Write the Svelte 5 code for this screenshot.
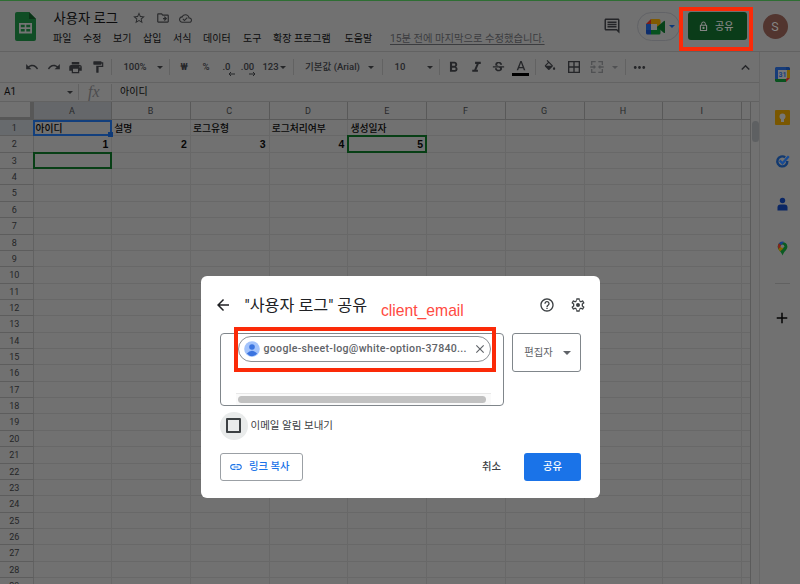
<script>
  const menus = [
    ['파일', 30], ['수정', 30], ['보기', 30], ['삽입', 30], ['서식', 30],
    ['데이터', 40], ['도구', 30], ['확장 프로그램', 71.5], ['도움말', 45.5],
  ];

  const P = {
    undo: 'M12.5 8c-2.65 0-5.05.99-6.9 2.6L2 7v9h9l-3.62-3.62c1.39-1.16 3.16-1.88 5.12-1.88 3.54 0 6.55 2.31 7.6 5.5l2.37-.78C21.08 11.03 17.15 8 12.5 8z',
    redo: 'M18.4 10.6C16.55 8.99 14.15 8 11.5 8c-4.65 0-8.58 3.03-9.96 7.22L3.9 16c1.05-3.19 4.05-5.5 7.6-5.5 1.95 0 3.73.72 5.12 1.88L13 16h9V7l-3.6 3.6z',
    print: 'M19 8H5c-1.66 0-3 1.34-3 3v6h4v4h12v-4h4v-6c0-1.66-1.34-3-3-3zm-3 11H8v-5h8v5zm3-7c-.55 0-1-.45-1-1s.45-1 1-1 1 .45 1 1-.45 1-1 1zm-1-9H6v4h12V3z',
    paint: 'M18 4V3c0-.55-.45-1-1-1H5c-.55 0-1 .45-1 1v4c0 .55.45 1 1 1h12c.55 0 1-.45 1-1V6h1v4H9v11c0 .55.45 1 1 1h2c.55 0 1-.45 1-1v-9h8V4h-3z',
    bold: 'M15.6 10.79c.97-.67 1.65-1.77 1.65-2.79 0-2.26-1.75-4-4-4H7v14h7.04c2.09 0 3.71-1.7 3.71-3.79 0-1.52-.86-2.82-2.15-3.42zM10 6.5h3c.83 0 1.5.67 1.5 1.5s-.67 1.5-1.5 1.5h-3v-3zm3.5 9H10v-3h3.5c.83 0 1.5.67 1.5 1.5s-.67 1.5-1.5 1.5z',
    italic: 'M10 4v3h2.21l-3.42 8H6v3h8v-3h-2.21l3.42-8H18V4z',
    strike: 'M7.24 8.75c-.26-.48-.39-1.03-.39-1.67 0-.61.13-1.16.4-1.67.26-.5.63-.93 1.11-1.29.48-.35 1.05-.63 1.7-.83.66-.19 1.39-.29 2.18-.29.81 0 1.54.11 2.21.34.66.22 1.23.54 1.69.94.47.4.83.88 1.08 1.43.25.55.38 1.15.38 1.81h-3.01c0-.31-.05-.59-.15-.85-.09-.27-.24-.49-.44-.68-.2-.19-.45-.33-.75-.44-.3-.1-.66-.16-1.06-.16-.39 0-.74.04-1.03.13-.29.09-.53.21-.72.36-.19.16-.34.34-.44.55-.1.21-.15.43-.15.66 0 .48.25.88.74 1.21.38.25.77.48 1.41.7H7.39c-.05-.08-.11-.17-.15-.25zM21 12v-2H3v2h9.62c.18.07.4.14.55.2.37.17.66.34.87.51.21.17.35.36.43.57.07.2.11.43.11.69 0 .23-.05.45-.14.66-.09.2-.23.38-.42.53-.19.15-.42.26-.71.35-.29.08-.63.13-1.01.13-.43 0-.83-.04-1.18-.13s-.66-.23-.91-.42c-.25-.19-.45-.44-.59-.75-.14-.31-.25-.76-.25-1.21H6.4c0 .55.08 1.13.24 1.58.16.45.37.85.65 1.21.28.35.6.66.98.92.37.26.78.48 1.22.65.44.17.9.3 1.38.39.48.08.96.13 1.44.13.8 0 1.53-.09 2.18-.28s1.21-.45 1.67-.79c.46-.34.82-.77 1.07-1.27s.38-1.07.38-1.71c0-.6-.1-1.14-.31-1.61-.05-.11-.11-.23-.17-.33H21z',
    color: 'M11 3L5.5 17h2.25l1.12-3h6.25l1.12 3h2.25L13 3h-2zm-1.38 9L12 5.67 14.38 12H9.62z',
    fill: 'M16.56 8.94L7.62 0 6.21 1.41l2.38 2.38-5.15 5.15c-.59.59-.59 1.54 0 2.12l5.5 5.5c.29.29.68.44 1.06.44s.77-.15 1.06-.44l5.5-5.5c.59-.58.59-1.53 0-2.12zM5.21 10L10 5.21 14.79 10H5.21zM19 11.5s-2 2.17-2 3.5c0 1.1.9 2 2 2s2-.9 2-2c0-1.33-2-3.5-2-3.5z',
    borders: 'M3 3v18h18V3H3zm8 16H5v-6h6v6zm0-8H5V5h6v6zm8 8h-6v-6h6v6zm0-8h-6V5h6v6z',
    merge: 'M3 3h7v2H5v4H3V3zm11 0h7v6h-2V5h-5V3zM3 15h2v4h5v2H3v-6zm16 0h2v6h-7v-2h5v-4zM2 11h5V8.500l3.500 3.500L7 15.500V13H2v-2zm20 0h-5V8.500L13.500 12l3.500 3.500V13h5v-2z',
    more: 'M6 10c-1.100 0-2 .9-2 2s.9 2 2 2 2-.9 2-2-.9-2-2-2zm12 0c-1.100 0-2 .9-2 2s.9 2 2 2 2-.9 2-2-.9-2-2-2zm-6 0c-1.100 0-2 .9-2 2s.9 2 2 2 2-.9 2-2-.9-2-2-2z',
    up: 'M12 8l-6 6 1.410 1.410L12 10.830l4.590 4.580L18 14z',
    star: 'M22 9.240l-7.190-.62L12 2 9.190 8.630 2 9.240l5.460 4.730L5.820 21 12 17.270 18.180 21l-1.630-7.030L22 9.240zM12 15.400l-3.760 2.270 1-4.280-3.320-2.880 4.380-.38L12 6.100l1.710 4.040 4.380.38-3.320 2.880 1 4.280L12 15.400z',
    folder: 'M20 6h-8l-2-2H4c-1.100 0-2 .9-2 2v12c0 1.100.9 2 2 2h16c1.100 0 2-.9 2-2V8c0-1.100-.9-2-2-2zm0 12H4V6h5.170l2 2H20v10zm-8-4h3.200l-1.600 1.600L15 17l4-4-4-4-1.400 1.400 1.600 1.600H12v2z',
    cloud: 'M19.350 10.040C18.670 6.590 15.640 4 12 4 9.110 4 6.600 5.640 5.350 8.040 2.340 8.360 0 10.910 0 14c0 3.310 2.690 6 6 6h13c2.760 0 5-2.240 5-5 0-2.640-2.050-4.780-4.650-4.960zM19 18H6c-2.210 0-4-1.790-4-4s1.790-4 4-4h.71C7.370 7.690 9.480 6 12 6c3.040 0 5.500 2.460 5.500 5.500v.5H19c1.660 0 3 1.340 3 3s-1.340 3-3 3zm-9-3.820l-2.090-2.090L6.500 13.500 10 17l6.010-6.010-1.410-1.410z',
    comment: 'M21.990 4c0-1.100-.89-2-1.990-2H4c-1.100 0-2 .9-2 2v12c0 1.100.9 2 2 2h14l4 4-.01-18zM20 4v13.170L18.830 16H4V4h16zM6 12h12v2H6v-2zm0-3h12v2H6V9zm0-3h12v2H6V6z',
    lock: 'M18 8h-1V6c0-2.760-2.240-5-5-5S7 3.240 7 6v2H6c-1.100 0-2 .9-2 2v10c0 1.100.9 2 2 2h12c1.100 0 2-.9 2-2V10c0-1.100-.9-2-2-2zM9 6c0-1.660 1.340-3 3-3s3 1.340 3 3v2H9V6zm8.500 13.500H6.500V10.500h11v9zm-5.500-2c1.380 0 2.500-1.120 2.500-2.500s-1.120-2.500-2.500-2.500-2.500 1.120-2.500 2.500 1.120 2.500 2.500 2.500z',
    back: 'M20 11H7.830l5.590-5.590L12 4l-8 8 8 8 1.410-1.410L7.830 13H20v-2z',
    help: 'M11 18h2v-2h-2v2zm1-16C6.480 2 2 6.480 2 12s4.480 10 10 10 10-4.480 10-10S17.520 2 12 2zm0 18c-4.410 0-8-3.590-8-8s3.590-8 8-8 8 3.590 8 8-3.590 8-8 8zm0-14c-2.210 0-4 1.790-4 4h2c0-1.100.9-2 2-2s2 .9 2 2c0 2-3 1.750-3 5h2c0-2.250 3-2.500 3-5 0-2.210-1.790-4-4-4z',
    gear: 'M19.430 12.980c.04-.32.07-.64.07-.98s-.03-.66-.07-.98l2.110-1.650c.19-.15.24-.42.12-.64l-2-3.460c-.12-.22-.39-.3-.61-.22l-2.490 1c-.52-.4-1.080-.73-1.690-.98l-.38-2.650C14.460 2.180 14.250 2 14 2h-4c-.25 0-.46.18-.49.42l-.38 2.650c-.61.25-1.170.59-1.690.98l-2.490-1c-.23-.09-.49 0-.61.22l-2 3.460c-.13.22-.07.49.12.64l2.110 1.650c-.04.32-.07.65-.07.98s.03.66.07.98l-2.110 1.650c-.19.15-.24.42-.12.64l2 3.460c.12.22.39.3.61.22l2.490-1c.52.4 1.080.73 1.690.98l.38 2.650c.03.24.24.42.49.42h4c.25 0 .46-.18.49-.42l.38-2.650c.61-.25 1.170-.59 1.690-.98l2.490 1c.23.09.49 0 .61-.22l2-3.460c.12-.22.07-.49-.12-.64l-2.110-1.650zM17.500 13.700l1.900 1.500-.9 1.600-2.250-.9-2.250 1.300L13.600 20h-3.200l-.4-2.800-2.250-1.300-2.250.9-.9-1.600 1.900-1.500v-3.400L4.600 8.800l.9-1.600 2.250.9L10 6.800l.4-2.800h3.200l.4 2.800 2.250 1.300 2.250-.9.9 1.600-1.900 1.500v3.400zM12 9a3 3 0 1 0 0 6 3 3 0 0 0 0-6z',
    close: 'M19 6.410L17.590 5 12 10.590 6.410 5 5 6.410 10.590 12 5 17.590 6.410 19 12 13.410 17.590 19 19 17.590 13.410 12z',
    link: 'M3.900 12c0-1.710 1.390-3.100 3.100-3.100h4V7H7c-2.760 0-5 2.240-5 5s2.240 5 5 5h4v-1.900H7c-1.710 0-3.100-1.390-3.100-3.100zM8 13h8v-2H8v2zm9-6h-4v1.900h4c1.710 0 3.100 1.390 3.100 3.100s-1.390 3.100-3.100 3.100h-4V17h4c2.760 0 5-2.240 5-5s-2.240-5-5-5z',
    plus: 'M19 13h-6v6h-2v-6H5v-2h6V5h2v6h6v2z',
  };

  const tools = [
    { w: 23, i: 'undo' }, { w: 22, i: 'redo' }, { w: 21, i: 'print', s: 15 }, { w: 23, i: 'paint' },
    { w: 4, k: 'sep' }, { w: 44, t: '100%' }, { w: 5, k: 'caret' }, { w: 14, k: 'sep' },
    { w: 16, t: '₩', b: 1 }, { w: 28, t: '%' }, { w: 13, t: '.0', arrow: 'left' }, { w: 29, t: '.00', arrow: 'right' },
    { w: 17, t: '123' }, { w: 8, k: 'caret' }, { w: 12, k: 'sep' },
    { w: 67, t: '기본값 (Arial)' }, { w: 10, k: 'caret' }, { w: 12, k: 'sep' },
    { w: 24, t: '10' }, { w: 13 }, { w: 10, k: 'caret' }, { w: 8, k: 'sep' },
    { w: 21, i: 'bold', s: 17 }, { w: 24, i: 'italic', s: 17 }, { w: 20, i: 'strike', s: 15 }, { w: 25, i: 'color', bar: 1, s: 16 },
    { w: 5, k: 'sep' }, { w: 24, i: 'fill' }, { w: 24, i: 'borders', s: 16 }, { w: 22, i: 'merge', dim: 1, s: 16 },
    { w: 13, k: 'caret', dim: 1 }, { w: 9, k: 'sep' }, { w: 18, i: 'more', s: 17 },
  ];

  const cols = ['A', 'B', 'C', 'D', 'E', 'F', 'G', 'H', 'I', ''];
  const rows = Array.from({ length: 29 }, (_, i) => i + 1);
  const data = {
    1: ['아이디', '설명', '로그유형', '로그처리여부', '생성일자'],
    2: ['1', '2', '3', '4', '5'],
  };
</script>

{#snippet icon(name, size)}
  <svg viewBox="0 0 24 24" width={size} height={size} fill="currentColor"><path d={P[name]} fill-rule="evenodd" /></svg>
{/snippet}

<div class="app">
  <header>
    <svg class="logo" width="21" height="29" viewBox="0 0 21 29">
      <path d="M2 0h12l7 7v20a2 2 0 0 1-2 2H2a2 2 0 0 1-2-2V2a2 2 0 0 1 2-2z" fill="#104d25" />
      <path d="M14 0l7 7h-7z" fill="#0a3317" />
      <path d="M4 11h13v10.500H4zM5.800 12.800v2.500h3.900v-2.500zm5.500 0v2.500h3.900v-2.500zm-5.500 4.100v2.700h3.900v-2.700zm5.500 0v2.700h3.900v-2.700z" fill="#747474" fill-rule="evenodd" />
    </svg>
    <div class="titles">
      <div class="name-row">
        <span class="doc">사용자 로그</span>
        {@render icon('star', 14)}{@render icon('folder', 14)}{@render icon('cloud', 13)}
      </div>
      <nav>
        {#each menus as [label, w]}<span style="width:{w}px">{label}</span>{/each}
        <a href="#history">15분 전에 마지막으로 수정했습니다.</a>
      </nav>
    </div>
    <div class="actions">
      <span class="comment">{@render icon('comment', 18)}</span>
      <div class="meet">
        <svg width="20" height="16" viewBox="0 0 20 16">
          <path d="M0 5h5v6H0z" fill="#12397a" /><path d="M0 5l5-5v5z" fill="#7d1c16" />
          <path d="M5 0h8a1.500 1.500 0 0 1 1.500 1.500V8H11V5H5z" fill="#805a00" />
          <path d="M0 11h5v4.500H1.500A1.500 1.500 0 0 1 0 14z" fill="#0c2c6c" />
          <path d="M5 11h6V8l3.500-2.500V14a1.500 1.500 0 0 1-1.500 1.500H5z" fill="#07521f" />
          <path d="M11 8l7-6q1-.5 1 .6v10.800q0 1-1 .5z" fill="#074219" /><path d="M5 5h6v6H5z" fill="#747474" />
        </svg>
        <i class="caret blue"></i>
      </div>
      <button class="share-top">{@render icon('lock', 11)}<span>공유</span></button>
      <span class="avatar">S</span>
    </div>
  </header>

  <div class="body">
    <main>
      <div class="toolbar">
        {#each tools as t}
          <span class="tool" class:dim={t.dim} style="width:{t.w}px">
            {#if t.k === 'sep'}<i class="sep"></i>
            {:else if t.k === 'caret'}<i class="caret"></i>
            {:else if t.i}{@render icon(t.i, t.s ?? 14)}{#if t.bar}<i class="bar"></i>{/if}
            {:else if t.t}<span class:heavy={t.b}>{t.t}</span>
              {#if t.arrow}
                <svg class="arrow" width="7" height="4" viewBox="0 0 7 4" stroke="currentColor" fill="none">
                  <path d={t.arrow === 'left' ? 'M7 2H1M3 0L1 2l2 2' : 'M0 2h6M4 0l2 2-2 2'} />
                </svg>
              {/if}
            {/if}
          </span>
        {/each}
        <span class="collapse">{@render icon('up', 17)}</span>
      </div>
      <div class="formula">
        <span class="ref">A1</span><i class="caret"></i><i class="sep"></i>
        <span class="fx">fx</span><i class="sep"></i><span class="value">아이디</span>
      </div>
      <div class="sheet">
        <div class="table">
          <div class="row head">
            <span class="num corner"></span>
            {#each cols as c}<span class="cell" class:sel={c === 'A'} class:last={!c}>{c}</span>{/each}
          </div>
          {#each rows as r}
            <div class="row">
              <span class="num" class:sel={r === 1}>{r}</span>
              {#each cols as c, j}
                <span class="cell" class:right={r === 2} class:last={!c}>
                  {data[r]?.[j] ?? ''}
                  {#if r === 1 && j === 0}<i class="ring active"></i>{/if}
                  {#if (r === 3 && j === 0) || (r === 2 && j === 4)}<i class="ring"></i>{/if}
                </span>
              {/each}
            </div>
          {/each}
        </div>
        <div class="scroll"><i></i></div>
      </div>
    </main>
    <aside>
      <svg width="15" height="15" viewBox="0 0 15 15">
        <path d="M1 0h10v3H3v9H0V1z" fill="#173c79" /><path d="M11 0h3l1 1v3h-4z" fill="#10346f" /><path d="M12 3h3v8h-3z" fill="#806000" />
        <path d="M0 12h11v3H1l-1-1z" fill="#0a531f" /><path d="M11 15v-4h4z" fill="#832018" /><path d="M3 3h9v8l-1 1H3z" fill="#777" />
        <text x="7.400" y="10" font-size="7" font-weight="700" text-anchor="middle" fill="#173f80">31</text>
      </svg>
      <svg width="15" height="15" viewBox="0 0 15 15"><rect width="15" height="15" rx="1" fill="#7a5700" /><circle cx="7.500" cy="6.500" r="3" fill="#777" /><path d="M6 9h3v3H6z" fill="#777" /></svg>
      <svg width="15" height="15" viewBox="0 0 15 15" fill="none"><path d="M10.200 3.300A5 5 0 1 0 12.300 7" stroke="#12396f" stroke-width="2.400" /><path d="M4.700 6.500L7.500 9.300L13.800 2.300" stroke="#174b95" stroke-width="2.300" /></svg>
      <svg width="15" height="15" viewBox="0 0 15 15" fill="#0b2765"><circle cx="7.500" cy="3.500" r="2.700" /><path d="M2.500 13.500v-3q0-3 3-3h4q3 0 3 3v3z" /></svg>
      <svg width="15" height="15" viewBox="0 0 15 15">
        <path d="M2.700 5.500A4.900 4.900 0 0 1 12.400 5.500C12.400 9 9 10 7.600 14.500 6 10 2.700 9 2.700 5.500z" fill="#0a5b22" />
        <path d="M3.800 2.200A4.900 4.900 0 0 1 9 .8L5.800 4.500z" fill="#173f88" /><path d="M3.800 2.200L7.500 5.300 3.400 8Q2 5 3.800 2.200z" fill="#85231a" />
        <path d="M3.400 8l3-3 2 2.500-3.500 3z" fill="#846300" /><circle cx="7.500" cy="5.200" r="1.800" fill="#727272" />
      </svg>
      <hr />
      <span class="plus">{@render icon('plus', 18)}</span>
    </aside>
  </div>

  <div class="mark top"></div>

  <section class="dialog">
    <div class="dlg-head">
      {@render icon('back', 18)}
      <h2>"사용자 로그" 공유</h2>
      <span class="tools">{@render icon('help', 16)}{@render icon('gear', 16)}</span>
    </div>
    <div class="people">
      <div class="input">
        <div class="chip">
          <svg width="16" height="16" viewBox="0 0 16 16"><circle cx="8" cy="8" r="7.800" fill="#a3c3fb" /><circle cx="8" cy="6" r="2.800" fill="#3b74e0" /><path d="M2.800 12.500Q8 7 13.200 12.500 8 18 2.800 12.500z" fill="#3b74e0" /></svg>
          <span>google-sheet-log@white-option-37840...</span>
          {@render icon('close', 14)}
        </div>
        <div class="hscroll"><i></i></div>
      </div>
      <div class="select"><span>편집자</span><i class="caret"></i></div>
    </div>
    <div class="notify"><span class="halo"><i></i></span><span>이메일 알림 보내기</span></div>
    <div class="foot">
      <button class="copy">{@render icon('link', 14)}<span>링크 복사</span></button>
      <span class="cancel">취소</span>
      <button class="primary">공유</button>
    </div>
    <span class="note">client_email</span>
    <div class="mark mail"></div>
  </section>
</div>

<style>
  :global(body) { margin: 0; background: #717171; }
  .app, .app * { box-sizing: border-box; }
  .app {
    position: relative; width: 800px; height: 584px; overflow: hidden; display: flex; flex-direction: column;
    background: #717171; color: #1b1c1d; font: 10px/1.2 Roboto, "Noto Sans CJK KR", sans-serif;
  }
  svg { display: block; flex: none; }
  i { display: block; flex: none; }
  button { font: inherit; padding: 0; margin: 0; border: 0; }
  header { height: 52px; flex: none; display: flex; border-top: 1px solid #2e6e33; border-bottom: 1px solid #626262; padding-left: 15px; }
  .logo { margin-top: 11px; }
  .titles { margin-left: 17px; width: 510px; display: flex; flex-direction: column; padding-top: 8px; }
  .name-row { display: flex; align-items: center; height: 18px; color: #2a2b2d; }
  .doc { font-size: 13.300px; width: 79px; padding: 2px 0 0 .5px; color: #0c0c0d; white-space: nowrap; }
  .name-row :global(svg + svg) { margin-left: 9.500px; }
  nav { display: flex; align-items: center; height: 22px; padding-top: 2px; color: #0b0b0c; white-space: nowrap; }
  nav span { flex: none; }
  nav a { color: #3b3c3f; font-size: 10.300px; text-decoration: underline; text-underline-offset: 2px; }
  .actions { display: flex; flex: 1; padding-top: 11px; }
  .comment { margin: 5px 0 0 40px; color: #242528; }
  .meet { width: 43px; height: 29px; margin-left: 16px; border: 1px solid #626367; border-radius: 15px; display: flex; align-items: center; padding-left: 8px; gap: 3px; flex: none; }
  .share-top { width: 59px; height: 28px; margin-left: 8px; border-radius: 3px; background: #0a3c19; color: #858585; display: flex; align-items: center; padding-left: 10px; gap: 6px; font-weight: 500; flex: none; }
  .share-top span { padding-top: 2px; }
  .avatar { width: 25px; height: 25px; border-radius: 50%; background: #52352f; color: #858585; margin: 2px 0 0 15.500px; font-size: 12.500px; display: grid; place-items: center; flex: none; }
  .caret { width: 0; height: 0; border: 3px solid transparent; border-top-color: #252628; border-bottom: 0; }
  .caret.blue { border-top-color: #103a78; }
  .body { flex: 1; min-height: 0; display: flex; }
  main { width: 760px; display: flex; flex-direction: column; border-right: 1px solid #676767; }
  .toolbar { height: 31px; flex: none; display: flex; align-items: center; padding-left: 20px; border-bottom: 1px solid #636363; color: #252629; }
  .tool { height: 30px; display: flex; align-items: center; justify-content: center; flex: none; position: relative; white-space: nowrap; font-weight: 500; font-size: 9.500px; }
  .tool.dim { color: #505153; }
  .dim .caret { border-top-color: #505153; }
  .heavy { font-weight: 700; }
  .sep { width: 1px; height: 16px; background: #626262; }
  .bar { position: absolute; bottom: 6px; left: 4px; width: 17px; height: 3px; background: #000; }
  .arrow { position: absolute; right: -2px; bottom: 6px; }
  .tool:nth-child(12) .arrow { right: 6px; }
  .collapse { margin-left: auto; margin-right: 5px; }
  .formula { height: 18px; flex: none; display: flex; align-items: center; padding-left: 4px; color: #0a0a0a; }
  .ref { width: 63px; }
  .formula .caret + .sep { margin-left: 5px; }
  .fx { width: 32px; padding-left: 9px; font: italic 16px/14px "Liberation Serif", serif; color: #4c4c4e; }
  .value { margin-left: 8px; }
  .sheet { flex: 1; min-height: 0; display: flex; border-top: 1px solid #626262; }
  .table { width: 751px; height: 100%; overflow: hidden; border-right: 1px solid #5b5b5b; flex: none; }
  .row { display: flex; height: 16.360px; }
  .row.head { height: 18px; color: #28292b; }
  .num { width: 33.500px; flex: none; border-right: 1px solid #626262; border-bottom: 1px solid #5d5d5d; text-align: center; padding-right: 4px; line-height: 16px; font-size: 9px; color: #242527; }
  .cell { position: relative; width: 78.720px; flex: none; border-right: 1px solid #686868; border-bottom: 1px solid #686868; line-height: 17px; padding: 0 3px 0 2px; white-space: nowrap; color: #060606; font-family: "Liberation Sans", "Noto Sans CJK KR", sans-serif; font-size: 9.800px; font-weight: 500; }
  .cell.right { text-align: right; font-size: 10.500px; font-weight: 700; }
  .cell.last { width: 20px; }
  .head .cell { text-align: center; line-height: 18px; color: #28292b; font-family: Roboto, sans-serif; font-size: 9px; font-weight: 400; border-color: #595959; }
  .head .sel { background: #65676a; }
  .num.sel { background: #676a6d; }
  .num.corner { border-right: 4px solid #575757; border-bottom: 3px solid #575757; }
  .ring { position: absolute; inset: -1px; border: 2px solid #073f15; z-index: 1; }
  .ring.active { border-color: #123f7d; inset: 0 -1px -1px -1px; }
  .ring.active::after { content: ""; position: absolute; right: -3px; bottom: -3px; width: 5px; height: 5px; background: #0e3a78; }
  .scroll { flex: 1; padding: 19px 1px 0 0; }
  .scroll i { width: 7px; height: 21px; border-radius: 4px; background: #5e6062; margin-left: 1px; }
  aside { width: 40px; display: flex; flex-direction: column; align-items: center; padding: 14.500px 0 0 4px; gap: 28.500px; font-family: Roboto, sans-serif; }
  hr { width: 15px; border: 0; border-top: 1px solid #616161; margin: -1px 0 0; }
  .plus { color: #050505; margin-top: -4px; }
  .mark { position: absolute; border: 4px solid #fb2a08; pointer-events: none; }
  .mark.top { left: 679px; top: 7px; width: 74px; height: 44px; }
  .mark.mail { left: 33px; top: 51px; width: 262px; height: 45px; }

  .dialog { position: absolute; left: 201px; top: 276px; width: 399px; height: 222px; border-radius: 6px; background: #fff; color: #3c4043; }
  .dlg-head { height: 57px; display: flex; align-items: center; padding-left: 13px; color: #202124; }
  h2 { margin: 0 0 0 12.500px; font-size: 16.200px; font-weight: 400; line-height: 20px; white-space: nowrap; padding-top: 3px; }
  .tools { margin-left: auto; margin-right: 14px; display: flex; gap: 15.500px; color: #3c4043; }
  .people { display: flex; gap: 8px; padding-left: 19px; height: 73px; }
  .input { width: 284px; border: 1px solid #80868b; border-radius: 4px; padding: 2px 12px 0 15px; display: flex; flex-direction: column; justify-content: space-between; }
  .chip { height: 26px; margin: 0 0 0 2px; width: 253px; border: 1px solid #8b8f94; border-radius: 13px; display: flex; align-items: center; padding-left: 5px; gap: 3.500px; color: #5f6368; font-size: 10.600px; font-weight: 500; white-space: nowrap; }
  .chip span { width: 206px; flex: none; letter-spacing: .3px; }
  .hscroll { height: 12px; width: 255px; background: #fafafa; border-top: 1px solid #e8e8e8; padding: 2px 0 0 2px; }
  .hscroll i { width: 248px; height: 7px; border-radius: 4px; background: #c1c1c1; }
  .select { width: 69px; height: 39px; border: 1px solid #80868b; border-radius: 3px; display: flex; align-items: center; justify-content: center; gap: 10px; color: #5f6368; padding-left: 2px; font-size: 10.300px; }
  .select span { padding-top: 1px; }
  .select .caret { border-width: 4px 4px 0; border-top-color: #5f6368; }
  .notify { display: flex; align-items: center; gap: 3px; margin: 6px 0 0 18.500px; height: 28px; font-size: 10.500px; color: #3c4043; }
  .notify > span + span { padding-top: 1px; }
  .halo { width: 28px; height: 28px; border-radius: 50%; background: #e9ebeb; display: flex; padding: 6px; }
  .halo i { width: 15px; height: 15px; border: 2px solid #3c4043; border-radius: 1px; }
  .foot { display: flex; align-items: center; margin: 13px 19px 0; height: 28px; font-weight: 500; font-size: 10.300px; }
  .copy { width: 83px; height: 28px; border: 1px solid #9ba0a5; border-radius: 3px; background: #fff; color: #1a73e8; display: flex; align-items: center; padding-left: 8px; gap: 6px; }
  .copy span, .cancel, .primary { padding-top: 1px; }
  .cancel { margin-left: auto; margin-right: 23px; }
  .primary { width: 57px; height: 28px; border-radius: 3px; background: #1a73e8; color: #fff; }
  .note { position: absolute; left: 180px; top: 25px; font: 15.700px/20px "Liberation Sans", sans-serif; color: #ff4a42; }
</style>
